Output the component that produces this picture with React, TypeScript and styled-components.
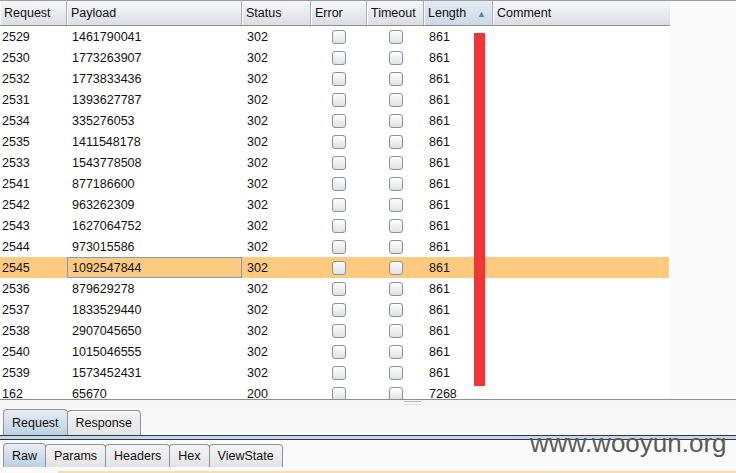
import React from "react";
import styled, { createGlobalStyle } from "styled-components";

const Global = createGlobalStyle`
  html, body { margin: 0; padding: 0; background: #fafafa; }
  body { font-family: "Liberation Sans", Arial, sans-serif; font-size: 12px; color: #111; overflow: hidden; }
`;

const Page = styled.div`
  position: relative;
  width: 736px;
  height: 473px;
  overflow: hidden;
  background: #fafafa;
  display: flex;
  flex-direction: column;
`;

const TableArea = styled.div`
  position: relative;
  height: 400px;
  flex-shrink: 0;
  border-top: 1px solid #9c9c9c;
  border-bottom: 1px solid #8e8e8e;
  box-sizing: border-box;
  overflow: hidden;
  display: flex;
`;

const Table = styled.div`
  width: 670px;
  background: #fff;
  display: flex;
  flex-direction: column;
`;

const cols = [67, 175, 69, 56, 57, 69, 177];

const HeaderRow = styled.div`
  display: grid;
  grid-template-columns: ${cols.map((c) => c + "px").join(" ")};
  height: 24px;
  flex-shrink: 0;
  border-bottom: 1px solid #8e9196;
  border-right: 1px solid #8e9196;
  box-sizing: content-box;
  width: 669px;
`;

const HeaderCell = styled.div<{ $active?: boolean }>`
  position: relative;
  display: flex;
  align-items: center;
  padding-left: 4px;
  font-size: 12.5px;
  color: #111;
  background: ${(p) =>
    p.$active
      ? "linear-gradient(#e3ebf3, #cbd8e6)"
      : "linear-gradient(#f5f6f8 0%, #e9ebee 50%, #d9dce1 100%)"};
  border-right: 1px solid #aab0b8;
  box-shadow: inset 1px 0 0 #fbfbfc;
  box-sizing: border-box;
  &:last-child { border-right: none; }
`;

const SortArrow = styled.span`
  position: absolute;
  right: 6px;
  top: 8px;
  font-size: 9px;
  color: #5b7fa6;
`;

const Row = styled.div<{ $sel?: boolean }>`
  display: grid;
  grid-template-columns: ${cols.map((c) => c + "px").join(" ")};
  height: 21px;
  width: 669px;
  background: ${(p) => (p.$sel ? "#fdca80" : "#fff")};
  flex-shrink: 0;
`;

const Cell = styled.div<{ $focus?: boolean }>`
  display: flex;
  align-items: center;
  padding-left: ${(p) => (p.$focus ? "4px" : "5px")};
  font-size: 12.5px;
  color: #111;
  box-sizing: border-box;
  ${(p) => (p.$focus ? "border: 1px solid #7a9cc0;" : "")}
  &:first-child { padding-left: 2px; }
`;

const CheckCell = styled.div`
  display: flex;
  align-items: center;
  justify-content: center;
`;

const Box = styled.div`
  width: 14px;
  height: 14px;
  border: 1px solid #8d9095;
  border-radius: 3px;
  box-sizing: border-box;
  background: linear-gradient(#fdfdfd, #dfe1e4);
`;

const RightPane = styled.div`
  flex: 1;
  background: #fafafa;
`;

const RedBar = styled.div`
  position: absolute;
  left: 474px;
  top: 32px;
  width: 11px;
  height: 353px;
  background: #f23434;
`;

const Splitter = styled.div`
  height: 8px;
  flex-shrink: 0;
  background: #f7f7f7;
  display: flex;
  padding-left: 404px;
`;

const Grip = styled.div`
  margin-top: 1px;
  width: 17px;
  height: 2px;
  border-top: 1px solid #b5b5b5;
  border-bottom: 1px solid #d8d8d8;
`;

const TabStrip = styled.div`
  display: flex;
  align-items: flex-end;
  padding-left: 3px;
  height: 27px;
  flex-shrink: 0;
  background: #f8f8f8;
`;

const Tab = styled.div<{ $active?: boolean; $h?: number }>`
  height: ${(p) => (p.$h ?? 25) + (p.$active ? 1 : 0)}px;
  padding: 0 8px;
  display: flex;
  align-items: center;
  font-size: 12.5px;
  color: #111;
  border: 1px solid #8f949a;
  border-bottom: none;
  border-radius: 4px 4px 0 0;
  margin-right: -1px;
  box-sizing: border-box;
  background: ${(p) =>
    p.$active ? "linear-gradient(#e6edf4, #bdd0e1)" : "linear-gradient(#f4f4f4, #e3e3e3)"};
`;

const DoubleLine = styled.div`
  height: 5px;
  flex-shrink: 0;
  border-top: 1px solid #2f3a48;
  border-bottom: 1px solid #2f3a48;
  background: #c7d6e4;
  box-sizing: border-box;
`;

const SubStrip = styled(TabStrip)`
  margin-top: 3px;
  height: 24px;
  background: #fafafa;
`;

const Bottom = styled.div`
  flex: 1;
  background: #fafafa;
  display: flex;
  align-items: flex-end;
`;

const OrangeLine = styled.div`
  margin-left: 58px;
  flex: 1;
  height: 2px;
  background: #f6dcb0;
`;

const Watermark = styled.div`
  position: absolute;
  left: 530px;
  top: 430px;
  font-family: "Liberation Sans", Arial, sans-serif;
  font-size: 26px;
  line-height: 1;
  color: #5a5a5a;
`;

const rows: [string, string, string][] = [
  ["2529", "1461790041", "861"],
  ["2530", "1773263907", "861"],
  ["2532", "1773833436", "861"],
  ["2531", "1393627787", "861"],
  ["2534", "335276053", "861"],
  ["2535", "1411548178", "861"],
  ["2533", "1543778508", "861"],
  ["2541", "877186600", "861"],
  ["2542", "963262309", "861"],
  ["2543", "1627064752", "861"],
  ["2544", "973015586", "861"],
  ["2545", "1092547844", "861"],
  ["2536", "879629278", "861"],
  ["2537", "1833529440", "861"],
  ["2538", "2907045650", "861"],
  ["2540", "1015046555", "861"],
  ["2539", "1573452431", "861"],
  ["162", "65670", "7268"],
];

const subTabs = ["Raw", "Params", "Headers", "Hex", "ViewState"];

export default function App() {
  return (
    <Page>
      <Global />
      <TableArea>
        <Table>
          <HeaderRow>
            <HeaderCell>Request</HeaderCell>
            <HeaderCell>Payload</HeaderCell>
            <HeaderCell>Status</HeaderCell>
            <HeaderCell>Error</HeaderCell>
            <HeaderCell>Timeout</HeaderCell>
            <HeaderCell $active>
              Length<SortArrow>▲</SortArrow>
            </HeaderCell>
            <HeaderCell>Comment</HeaderCell>
          </HeaderRow>
          {rows.map(([req, pay, len]) => {
            const sel = req === "2545";
            return (
              <Row key={req} $sel={sel}>
                <Cell>{req}</Cell>
                <Cell $focus={sel}>{pay}</Cell>
                <Cell>{req === "162" ? "200" : "302"}</Cell>
                <CheckCell><Box /></CheckCell>
                <CheckCell><Box /></CheckCell>
                <Cell>{len}</Cell>
                <Cell />
              </Row>
            );
          })}
        </Table>
        <RightPane />
        <RedBar />
      </TableArea>
      <Splitter>
        <Grip />
      </Splitter>
      <TabStrip>
        <Tab $active>Request</Tab>
        <Tab>Response</Tab>
      </TabStrip>
      <DoubleLine />
      <SubStrip>
        {subTabs.map((t, i) => (
          <Tab key={t} $active={i === 0} $h={23}>
            {t}
          </Tab>
        ))}
      </SubStrip>
      <Bottom>
        <OrangeLine />
      </Bottom>
      <Watermark>www.wooyun.org</Watermark>
    </Page>
  );
}
